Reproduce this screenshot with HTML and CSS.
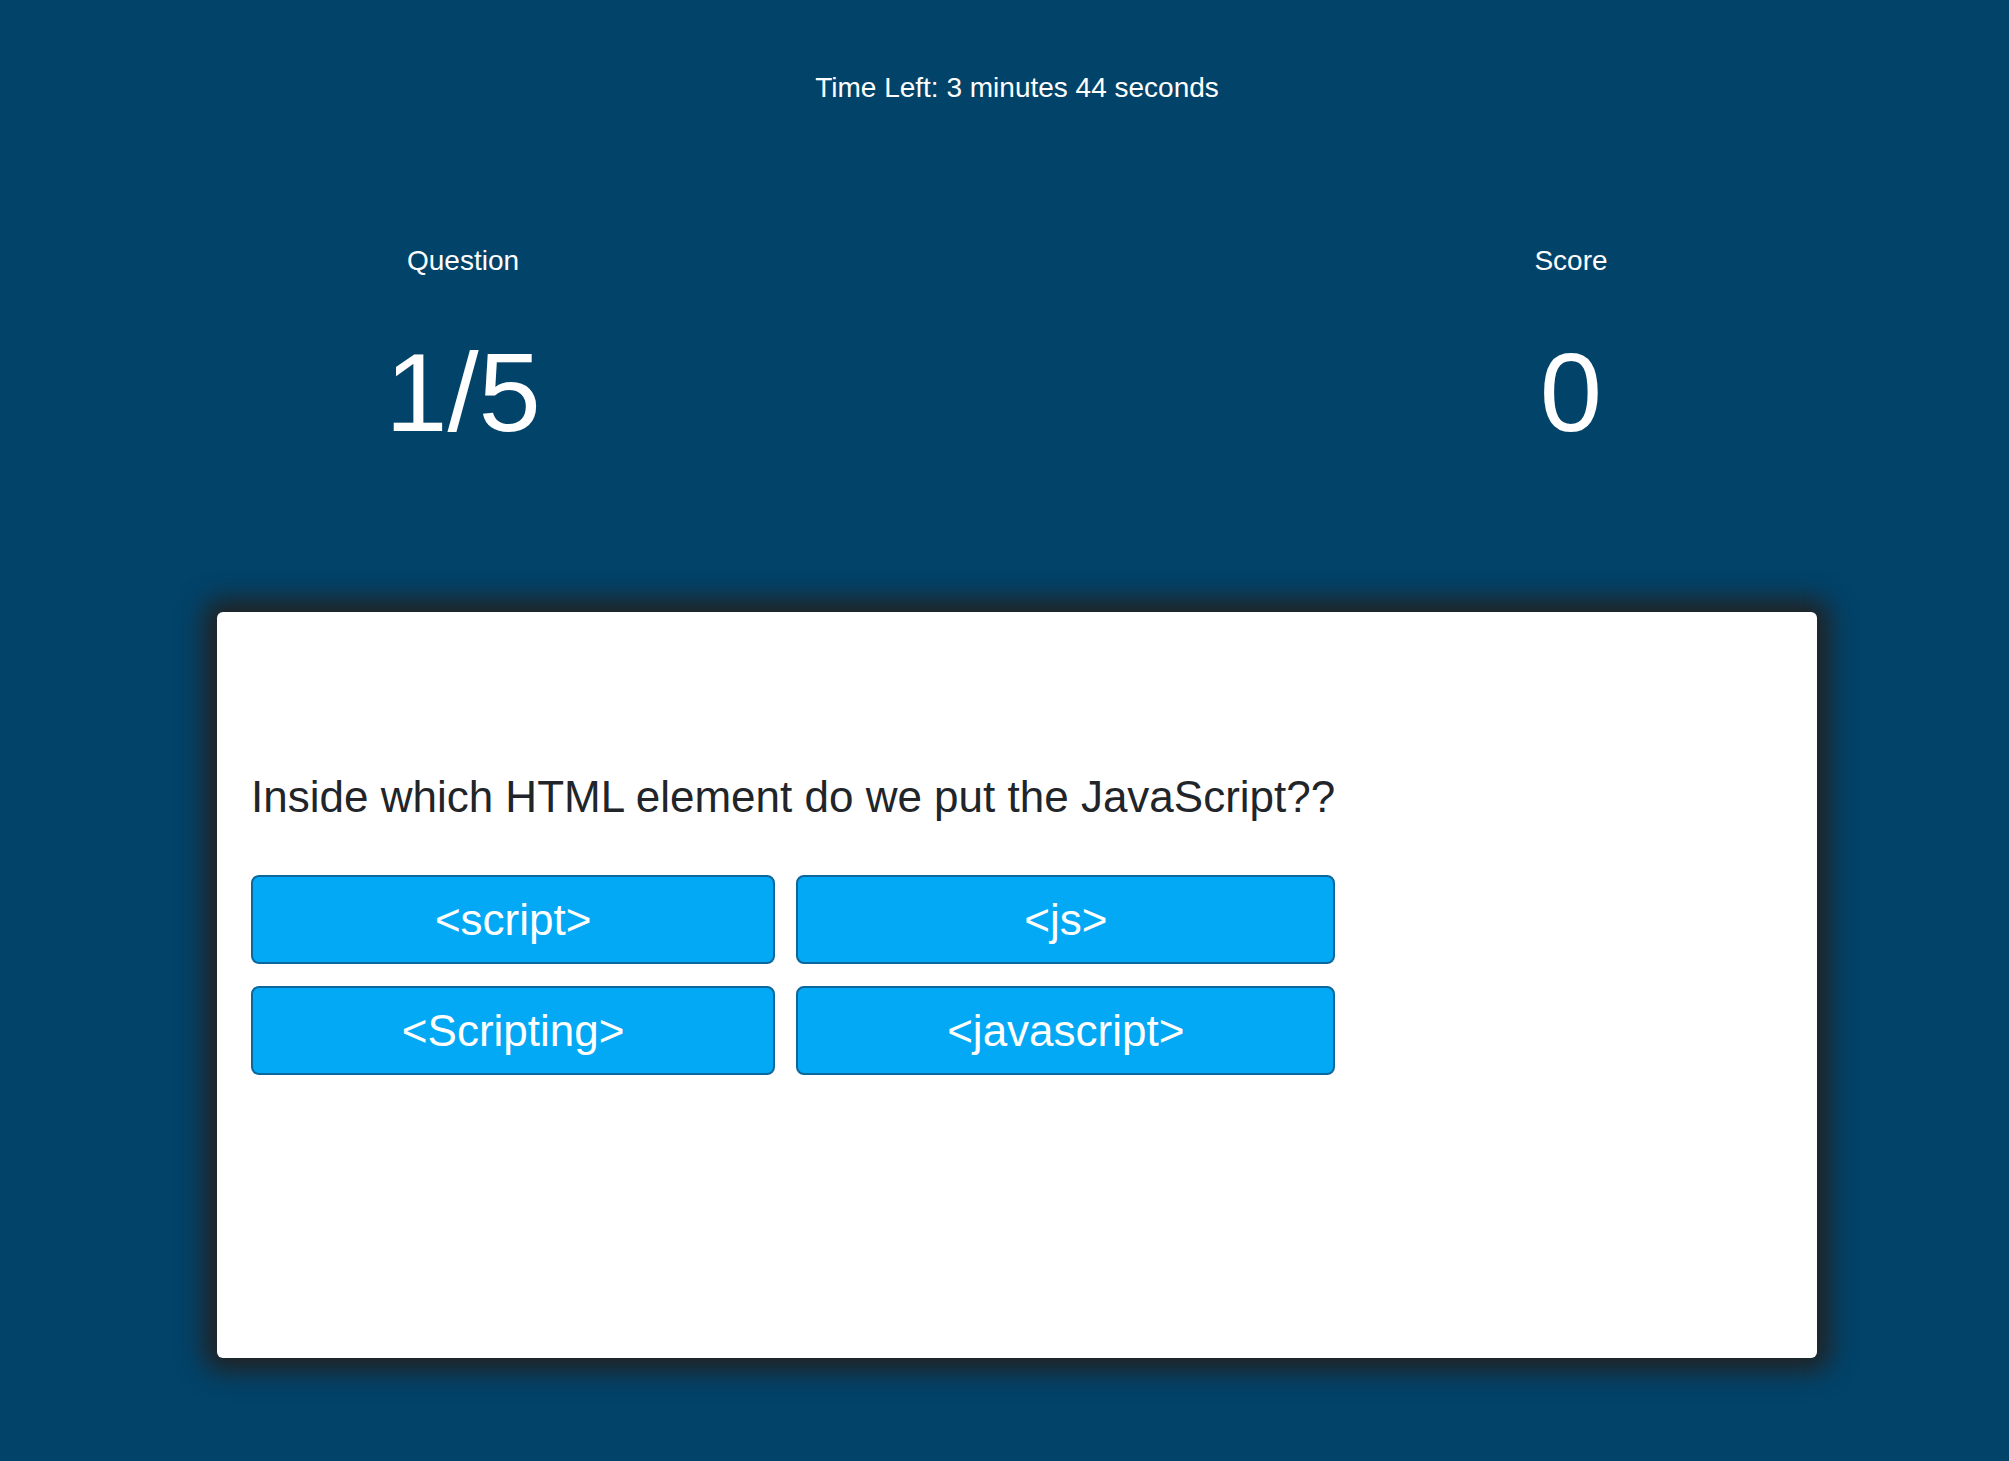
FILE: index.html
```html
<!DOCTYPE html>
<html lang="en">
<head>
<meta charset="utf-8">
<title>Quiz</title>
<link rel="stylesheet" href="styles.css">
</head>
<body>
<div class="page">
  <div class="timer">Time Left: 3 minutes 44 seconds</div>
  <div class="stats">
    <div class="stat">
      <div class="stat-label">Question</div>
      <div class="stat-value">1/5</div>
    </div>
    <div class="stat">
      <div class="stat-label">Score</div>
      <div class="stat-value">0</div>
    </div>
  </div>
  <div class="card">
    <div class="quiz">
      <h2 class="question">Inside which HTML element do we put the JavaScript??</h2>
      <div class="answers">
        <button class="answer">&lt;script&gt;</button>
        <button class="answer">&lt;js&gt;</button>
        <button class="answer">&lt;Scripting&gt;</button>
        <button class="answer">&lt;javascript&gt;</button>
      </div>
    </div>
  </div>
</div>
</body>
</html>
```

FILE: styles.css
```css
html, body {
  margin: 0;
  padding: 0;
}

body {
  background: #02436a;
  font-family: "Liberation Sans", Arial, sans-serif;
  color: #ffffff;
}

.page {
  width: 1600px;
  margin-left: 217px;
  padding-bottom: 60px;
}

.timer {
  padding-top: 72px;
  font-size: 28px;
  line-height: 32px;
  text-align: center;
}

.stats {
  margin-top: 141px;
  display: flex;
  justify-content: space-between;
  padding: 0 146px;
}

.stat {
  width: 200px;
  text-align: center;
}

.stat-label {
  font-size: 28px;
  line-height: 32px;
}

.stat-value {
  margin-top: 51px;
  font-size: 112px;
  line-height: 129px;
}

.card {
  margin-top: 155px;
  height: 746px;
  box-sizing: border-box;
  background: #ffffff;
  border-radius: 6px;
  box-shadow: 0 0 26px 13px #222222;
  padding: 159px 0 0 34px;
}

.quiz {
  width: fit-content;
}

.question {
  margin: 0 0 53px 0;
  font-size: 44px;
  line-height: 51px;
  font-weight: normal;
  color: #212529;
  white-space: nowrap;
}

.answers {
  display: grid;
  grid-template-columns: auto auto;
  gap: 22px 21px;
}

.answer {
  font-family: "Liberation Sans", Arial, sans-serif;
  font-size: 44px;
  line-height: 51px;
  padding: 17px 20px;
  border: 2px solid #0b679c;
  border-radius: 8px;
  background: #03a9f4;
  color: #ffffff;
  cursor: pointer;
}
```
